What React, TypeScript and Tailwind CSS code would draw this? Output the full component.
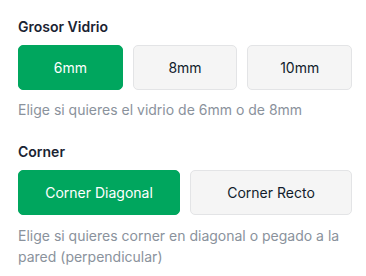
import React from "react";

const font = { fontFamily: "Inter, 'Noto Sans', sans-serif" };

function Option({ label, active }: { label: string; active?: boolean }) {
  return (
    <button
      className={
        active
          ? "flex-1 h-[45px] rounded-[5px] bg-[#00a65e] text-white text-[14px] border border-[#00a65e]"
          : "flex-1 h-[45px] rounded-[5px] bg-[#f5f5f5] text-[#111c2b] text-[14px] border border-[#e3e4e6]"
      }
    >
      {label}
    </button>
  );
}

export default function App() {
  return (
    <div className="w-[366px] h-[276px] bg-white pl-[18px] pr-[14px] pt-[17px]" style={font}>
      <div className="text-[14px] leading-[20px] font-semibold text-[#1a2332]">Grosor Vidrio</div>
      <div className="flex gap-[10px] mt-[8px]">
        <Option label="6mm" active />
        <Option label="8mm" />
        <Option label="10mm" />
      </div>
      <p className="mt-[10px] text-[14px] leading-[20px] text-[#8a929c]">
        Elige si quieres el vidrio de 6mm o de 8mm
      </p>
      <div className="mt-[22px] text-[14px] leading-[20px] font-semibold text-[#1a2332]">Corner</div>
      <div className="flex gap-[10px] mt-[8px]">
        <Option label="Corner Diagonal" active />
        <Option label="Corner Recto" />
      </div>
      <p className="mt-[10px] text-[14px] leading-[21px] text-[#8a929c]">
        Elige si quieres corner en diagonal o pegado a la pared (perpendicular)
      </p>
    </div>
  );
}
